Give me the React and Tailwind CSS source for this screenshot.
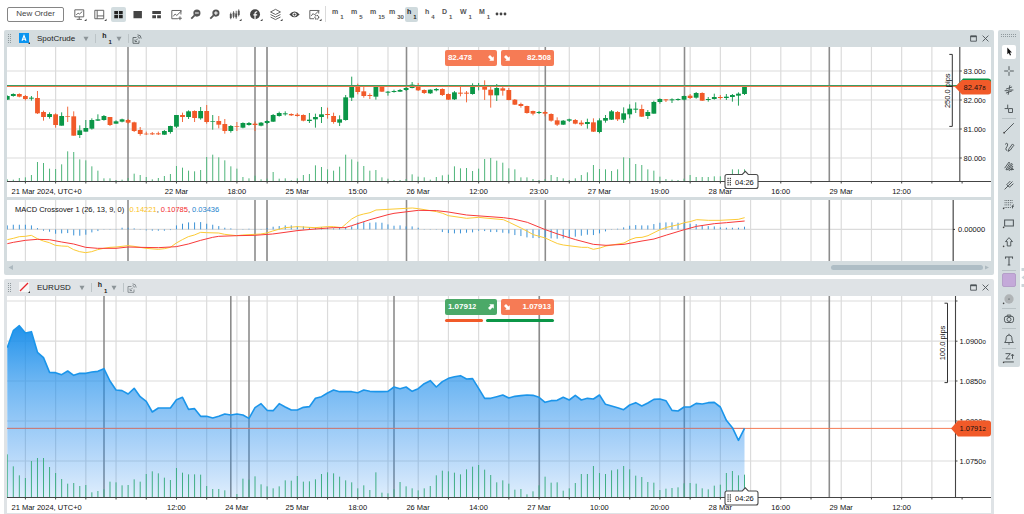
import React from "react";

const STEP = 6.043;
const xAt = (i) => 13.3 + STEP * i;
const GRID_X = Array.from({ length: 31 }, (_, k) => 25.4 + 30.216 * k);
const labelX = (k) => 176.4 + 60.43 * k;

const GREEN = "#0b9647";
const RED = "#f15a29";

/* body top, body bottom, wick top, wick bottom, rising (1) or falling (0) */
const CANDLES = [
  [153, 164, 151, 165, 1], [147, 153, 145, 155, 1], [147, 155, 145, 157, 0], [153, 162, 150, 166, 0], [158, 161, 153, 167, 1],
  [159, 205, 138, 207, 0], [201, 216, 197, 227, 0], [207, 216, 202, 221, 1], [208, 240, 205, 248, 0], [213, 242, 202, 242, 1],
  [213, 215, 185, 231, 0], [214, 272, 199, 272, 0], [256, 270, 241, 279, 1], [249, 260, 225, 260, 1], [225, 251, 220, 254, 1],
  [223, 227, 208, 228, 1], [213, 225, 210, 227, 1], [216, 240, 216, 243, 0], [229, 236, 226, 236, 1], [223, 230, 221, 232, 1],
  [225, 233, 222, 236, 0], [232, 258, 230, 261, 0], [255, 267, 246, 272, 0], [266, 268, 260, 270, 0], [265, 268, 261, 270, 0],
  [265, 268, 260, 270, 0], [258, 269, 255, 270, 1], [243, 261, 242, 266, 1], [210, 245, 210, 249, 1], [210, 216, 203, 231, 0],
  [199, 216, 196, 222, 1], [198, 219, 196, 231, 0], [198, 220, 186, 224, 1], [198, 231, 180, 236, 0], [228, 230, 210, 254, 1],
  [228, 239, 213, 250, 0], [237, 258, 222, 266, 0], [243, 258, 240, 263, 1], [243, 245, 231, 258, 0], [234, 248, 232, 250, 1],
  [234, 240, 231, 242, 1], [236, 240, 230, 258, 0], [233, 242, 231, 244, 1], [228, 234, 226, 237, 1], [210, 230, 207, 231, 1],
  [204, 213, 200, 215, 1], [205, 208, 199, 212, 1], [207, 211, 205, 213, 0], [209, 213, 204, 215, 0], [210, 227, 208, 229, 0],
  [224, 228, 204, 234, 1], [216, 223, 206, 248, 1], [208, 216, 186, 234, 1], [207, 210, 188, 221, 0], [213, 231, 203, 236, 0],
  [223, 233, 211, 243, 1], [157, 225, 150, 227, 1], [124, 158, 95, 168, 1], [124, 141, 116, 148, 0], [139, 153, 122, 158, 0],
  [150, 153, 145, 162, 0], [124, 155, 120, 164, 1], [124, 140, 124, 141, 0], [140, 143, 138, 152, 1], [138, 141, 134, 143, 1],
  [135, 140, 132, 141, 1], [129, 135, 127, 138, 1], [119, 129, 111, 130, 1], [121, 136, 114, 138, 0], [135, 144, 133, 147, 0],
  [134, 145, 133, 147, 1], [132, 136, 129, 139, 1], [132, 150, 130, 153, 0], [147, 164, 145, 165, 0], [142, 163, 138, 165, 1],
  [143, 146, 124, 154, 0], [143, 146, 138, 172, 0], [123, 147, 115, 149, 1], [120, 123, 114, 136, 1], [120, 134, 106, 165, 0],
  [134, 151, 124, 188, 0], [129, 151, 117, 168, 1], [130, 137, 123, 152, 0], [135, 165, 129, 166, 0], [164, 179, 162, 180, 0],
  [177, 183, 173, 188, 0], [183, 204, 182, 206, 0], [198, 206, 197, 211, 0], [201, 204, 198, 207, 1], [201, 206, 197, 214, 0],
  [207, 227, 205, 230, 0], [226, 239, 217, 243, 0], [227, 239, 225, 240, 1], [223, 227, 221, 231, 1], [225, 236, 222, 238, 0],
  [233, 238, 226, 243, 0], [231, 237, 221, 251, 1], [232, 260, 220, 261, 0], [226, 261, 220, 265, 1], [219, 227, 210, 233, 1],
  [199, 224, 195, 225, 1], [201, 223, 198, 228, 0], [205, 224, 187, 234, 1], [191, 208, 178, 220, 1], [191, 194, 172, 204, 1],
  [192, 215, 179, 216, 0], [201, 213, 195, 222, 1], [171, 206, 167, 206, 1], [162, 171, 160, 176, 1], [163, 166, 162, 171, 0],
  [163, 166, 160, 174, 1], [162, 165, 160, 167, 1], [153, 164, 152, 166, 1], [152, 159, 147, 162, 0], [144, 158, 141, 161, 1],
  [144, 167, 142, 168, 0], [162, 165, 156, 170, 1], [156, 162, 146, 164, 1], [156, 159, 150, 164, 0], [155, 159, 147, 165, 1],
  [150, 156, 147, 170, 1], [146, 152, 142, 182, 1], [125, 147, 120, 150, 1],
];

const CRUDE_VOLUME = [
  403, 404, 399, 397, 390, 351, 354, 371, 372, 358, 319, 321, 343, 346, 364, 377, 400, 400, 405, 404, 399, 386, 390, 396, 403, 399, 393, 387,
  363, 368, 377, 379, 375, 336, 329, 337, 346, 364, 371, 396, 400, 392, 403, 401, 381, 401, 400, 406, 400, 390, 387, 361, 366, 373, 377, 365,
  329, 343, 350, 363, 377, 375, 397, 401, 405, 405, 402, 388, 395, 397, 404, 396, 391, 389, 364, 370, 369, 378, 371, 342, 339, 347, 353, 370,
  373, 397, 397, 402, 405, 402, 390, 396, 400, 405, 400, 390, 382, 360, 372, 373, 378, 373, 337, 339, 357, 360, 373, 377, 395, 402, 404, 405,
  401, 390, 396, 396, 396, 394, 394, 390, 373, 373, 373,
];

const MACD_BARS = [
  12, 14, 14, 14, 12, 4, -4, -7, -13, -12, -11, -18, -19, -16, -9, -5, -1, -1, 1, 5, 5, 3, 1, -3, -4, -4, -4, -2, 12, 17, 21, 21, 22, 17, 14,
  10, 5, 3, 1, 1, 2, 1, 1, 4, 8, 10, 12, 12, 10, 9, 7, 5, 7, 5, 3, 7, 5, 9, 21, 22, 20, 21, 20, 15, 11, 12, 9, 9, 5, 1, 1, -1, -8, -11, -12,
  -12, -10, -9, -4, -5, -8, -8, -10, -12, -17, -20, -24, -26, -26, -27, -27, -28, -27, -25, -22, -19, -16, -17, -12, -6, 1, 2, 6, 11, 13, 12,
  12, 16, 20, 21, 21, 20, 19, 17, 16, 13, 10, 9, 6, 5, 5, 5, 8,
];

const MACD_FAST =
  "22,134 40,130 58,125 76,124 94,121 112,131 130,138 148,143 166,151 185,153 203,154 221,164 239,170 257,173 275,170 293,164 311,160 330,157 348,156 384,152 402,154 438,160 475,163 493,161 511,157 529,144 547,134 565,125 583,120 602,112 620,113 656,114 674,118 710,122 728,120 764,118 782,117 800,114 818,108 836,103 855,98 891,95 945,98 982,95 1000,95 1025,98 1040,85 1055,72 1073,62 1091,57 1110,53 1128,45 1182,42 1237,39 1255,41 1310,50 1328,55 1345,62 1400,70 1436,67 1455,69 1510,74 1528,82 1565,100 1582,109 1600,119 1636,129 1655,138 1673,146 1690,150 1745,157 1763,157 1780,163 1800,159 1818,153 1872,144 1890,134 1908,128 1926,127 1944,122 1980,104 2000,97 2035,89 2053,83 2070,80 2090,74 2125,76 2160,76 2215,73 2234,68";
const MACD_SLOW =
  "22,146 40,142 76,136 112,133 148,134 185,141 221,147 257,157 293,160 348,160 384,156 420,157 475,158 529,155 565,147 602,136 638,127 656,124 710,122 764,121 818,117 855,112 891,107 945,102 1000,98 1035,98 1055,92 1110,74 1164,59 1182,55 1255,46 1310,47 1345,51 1400,60 1455,64 1510,68 1540,72 1582,82 1636,104 1673,117 1727,134 1780,148 1818,151 1872,148 1926,138 1962,132 2000,120 2053,104 2090,94 2143,86 2180,83 2234,78";

const EUR_PRICE = [
  158, 107, 92, 114, 110, 172, 188, 232, 233, 239, 228, 241, 235, 235, 231, 229, 221, 258, 285, 287, 297, 280, 305, 319, 351, 339, 339, 339,
  314, 307, 343, 341, 364, 364, 369, 364, 357, 360, 357, 360, 370, 338, 326, 346, 347, 326, 336, 345, 345, 337, 335, 310, 305, 294, 285, 290,
  290, 290, 293, 285, 289, 290, 290, 289, 276, 281, 276, 289, 281, 266, 257, 276, 260, 250, 245, 242, 252, 251, 280, 310, 310, 305, 300, 309,
  304, 302, 300, 301, 307, 322, 317, 316, 307, 315, 301, 315, 310, 312, 300, 328, 333, 338, 344, 330, 323, 333, 324, 313, 312, 317, 346, 348,
  336, 336, 325, 327, 323, 322, 336, 376, 398, 436, 400,
];

const EUR_VOLUME = [
  478, 514, 541, 549, 498, 489, 489, 516, 534, 552, 566, 564, 573, 570, 592, 588, 583, 560, 562, 571, 570, 553, 560, 537, 529, 535, 548, 555,
  519, 533, 538, 538, 539, 573, 582, 582, 586, 608, 597, 551, 554, 544, 568, 574, 580, 574, 556, 557, 543, 560, 559, 553, 537, 532, 535, 545,
  556, 562, 580, 571, 585, 532, 593, 595, 583, 561, 574, 580, 586, 580, 573, 541, 527, 529, 533, 538, 523, 515, 510, 524, 540, 562, 556, 566,
  584, 582, 598, 589, 571, 545, 563, 562, 587, 580, 564, 537, 537, 513, 534, 537, 526, 523, 513, 523, 542, 546, 561, 563, 585, 581, 579, 577,
  565, 564, 566, 580, 583, 572, 569, 534, 528, 541, 539,
];

const CRUDE_SESSIONS = [128, 255, 267, 406.5, 545.3, 684.5, 829.3];
const EUR_SESSIONS = [104, 230.8, 249, 394, 539.3, 684.3, 829.3];

const toPoints = (text) =>
  text
    .split(" ")
    .map((p) => p.split(",").map(Number))
    .map(([x, y]) => `${x / 3},${195 + y / 3}`)
    .join(" ");

/* Shapes are placed in page units; labels sit on the doubled viewBox grid. */
function ChartSvg({ top, height, label, children, labels }) {
  return (
    <svg
      viewBox={`14 ${top * 2} 1968 ${height * 2}`}
      role="img"
      aria-label={label}
      className="block w-full bg-white font-['Liberation_Sans',Arial,sans-serif]"
    >
      <g transform="scale(2)">{children}</g>
      {labels}
    </svg>
  );
}

function Grid({ top, bottom, right, rows, sessions }) {
  return (
    <g>
      {GRID_X.map((x) => (
        <line key={x} x1={x} x2={x} y1={top} y2={bottom} stroke="#dbdbdb" strokeWidth="1.2" />
      ))}
      {rows.map((y) => (
        <line key={y} x1="7" x2={right} y1={y} y2={y} stroke="#dbdbdb" strokeWidth="1.2" />
      ))}
      {sessions.map((x) => (
        <line key={x} x1={x} x2={x} y1={top} y2={bottom} stroke="#8c8c8c" strokeWidth="1.6" />
      ))}
    </g>
  );
}

function Axes({ top, y, x, ticks }) {
  return (
    <g stroke="#444" fill="none">
      <line x1="7" x2="991" y1={y} y2={y} />
      <line x1={x} x2={x} y1={top} y2={y} strokeWidth="1.1" />
      {[...GRID_X, 25.4 + 30.216 * 31].map((gx) => (
        <line key={gx} x1={gx} x2={gx} y1={y} y2={y + 2} />
      ))}
      {ticks.map((t) => (
        <line key={t} x1={x} x2={x + 2} y1={t} y2={t} />
      ))}
    </g>
  );
}

function TimeLabels({ y, items }) {
  return (
    <g fontSize="15" fill="#111">
      <text x="23" y={y}>21 Mar 2024, UTC+0</text>
      {items.map((t, k) =>
        t ? (
          <text key={k} x={labelX(k) * 2} y={y} textAnchor="middle">
            {t}
          </text>
        ) : null
      )}
    </g>
  );
}

function Price({ x, y, main, last }) {
  return (
    <text x={x} y={y} fontSize="15" fill="#111">
      {main}
      <tspan fontSize="12">{last}</tspan>
    </text>
  );
}

function Countdown({ y }) {
  return (
    <g>
      <path
        d={`M727 ${y}H742.3L745.3 ${y - 3.2}L748.3 ${y}H756Q758 ${y} 758 ${y + 2}V${y + 12}Q758 ${y + 14} 756 ${y + 14}H727Q725 ${y + 14} 725 ${y + 12}V${y + 2}Q725 ${y} 727 ${y}Z`}
        fill="#fff"
        stroke="#4a4a4a"
        strokeWidth="1.1"
      />
      {[0, 1, 2, 3].map((r) =>
        [0, 1].map((c) => (
          <rect key={`${r}${c}`} x={727.4 + c * 2.3} y={y + 3.3 + r * 2.1} width="1.3" height="1.3" fill="#444" />
        ))
      )}
    </g>
  );
}

function CrudeChart() {
  return (
    <ChartSvg
      top={47}
      height={150}
      label="SpotCrude candles"
      labels={
        <g>
          <TimeLabels
            y={387}
            items={["22 Mar", "18:00", "25 Mar", "15:00", "26 Mar", "12:00", "23:00", "27 Mar", "19:00", "28 Mar", "16:00", "29 Mar", "12:00"]}
          />
          <g transform="scale(2)">
            <Countdown y={174.5} />
          </g>
          <text x="1470" y="369" fontSize="15" fill="#111">04:26</text>
          <Price x={1927} y={148} main="83.00" last="0" />
          <Price x={1927} y={205} main="82.00" last="0" />
          <Price x={1927} y={263} main="81.00" last="0" />
          <Price x={1927} y={321} main="80.00" last="0" />
          <path d="M1912 173L1926 157H1976Q1982 157 1982 162V180H1926Z" fill={GREEN} />
          <path d="M1910 174L1924 160H1976Q1982 160 1982 165V184Q1982 189 1976 189H1924Z" fill={RED} />
          <Price x={1927} y={179} main="82.47" last="8" />
          <text transform="translate(1899 181.500) rotate(-90)" fontSize="15" fill="#111" textAnchor="middle">250.0 pips</text>
        </g>
      }
    >
      <Grid top={47} bottom={181} right={959} rows={[71, 100, 129, 158]} sessions={CRUDE_SESSIONS} />
      {CRUDE_VOLUME.map((v, k) => (
        <line key={k} x1={xAt(k - 1)} x2={xAt(k - 1)} y1={45 + v / 3} y2="181" stroke="#4fb57a" />
      ))}
      {CANDLES.map(([t, b, h, l, up], k) => {
        const x = xAt(k - 1);
        const color = up ? GREEN : RED;
        return (
          <g key={k}>
            <line x1={x} x2={x} y1={45 + h / 3} y2={45 + l / 3} stroke={color} strokeWidth="0.9" />
            <rect x={x - 2.4} y={45 + t / 3} width="4.800" height={(b - t) / 3} fill={color} />
          </g>
        );
      })}
      <line x1="7" x2="957" y1="86.500" y2="86.500" stroke="#f0764c" />
      <line x1="7" x2="957" y1="85.500" y2="85.500" stroke="#3b9d62" />
      <Axes top={47} y={181.5} x={959.8} ticks={[71, 100, 129, 158]} />
      <path d="M949.300 54.400H952.300V126.400H949.300" fill="none" stroke="#333" />
    </ChartSvg>
  );
}

function MacdChart() {
  return (
    <ChartSvg
      top={200}
      height={61}
      label="MACD Crossover"
      labels={
        <g fontSize="15">
          <text x="30" y="424" fill="#111">
            MACD Crossover 1 (26, 13, 9, 0)
          </text>
          <text x="259" y="424" fill="#111">
            <tspan fill="#fbc21e">0.14221</tspan>, <tspan fill="#f22c2c">0.10785</tspan>, <tspan fill="#2483cd">0.03436</tspan>
          </text>
          <text x="1916" y="464" fill="#111">0.00000</text>
        </g>
      }
    >
      <Grid top={200} bottom={261} right={953} rows={[229.4]} sessions={CRUDE_SESSIONS} />
      {MACD_BARS.map((v, k) => (
        <line key={k} x1={xAt(k - 1)} x2={xAt(k - 1)} y1="229.400" y2={229.4 - v / 3} stroke="#3d93d6" />
      ))}
      <polyline points={toPoints(MACD_FAST)} fill="none" stroke="#fccb35" />
      <polyline points={toPoints(MACD_SLOW)} fill="none" stroke="#f83a3a" />
      <line x1="953.200" x2="953.200" y1="200" y2="261" stroke="#555" strokeWidth="1.300" />
      <line x1="953" x2="955" y1="229.400" y2="229.400" stroke="#333" />
    </ChartSvg>
  );
}

function EurChart() {
  const line = EUR_PRICE.map((v, k) => `${xAt(k - 1)},${295 + v / 3}`);
  const rows = [301, 341.2, 381, 421, 461];
  return (
    <ChartSvg
      top={296}
      height={217}
      label="EURUSD area"
      labels={
        <g>
          <TimeLabels
            y={1019}
            items={["12:00", "24 Mar", "25 Mar", "18:00", "26 Mar", "14:00", "27 Mar", "10:00", "20:00", "28 Mar", "16:00", "29 Mar", "12:00"]}
          />
          <g transform="scale(2)">
            <Countdown y={491} />
          </g>
          <text x="1470" y="1001" fontSize="15" fill="#111">04:26</text>
          <Price x={1919} y={688} main="1.0900" last="0" />
          <Price x={1919} y={767} main="1.0850" last="0" />
          <Price x={1919} y={847} main="1.0800" last="0" />
          <Price x={1919} y={927} main="1.0750" last="0" />
          <path d="M1902 857L1916 841H1976Q1982 841 1982 846V867Q1982 873 1976 873H1916Z" fill={RED} />
          <Price x={1919} y={862} main="1.0791" last="2" />
          <text transform="translate(1889 686) rotate(-90)" fontSize="15" fill="#111" textAnchor="middle">100.0 pips</text>
        </g>
      }
    >
      <defs>
        <linearGradient id="eur-fill" gradientUnits="userSpaceOnUse" x1="0" x2="0" y1="325" y2="498">
          <stop offset="0" stopColor="#1a8fea" stopOpacity="0.97" />
          <stop offset="0.330" stopColor="#1f8fec" stopOpacity="0.65" />
          <stop offset="0.750" stopColor="#2b8eee" stopOpacity="0.35" />
          <stop offset="1" stopColor="#2b8eee" stopOpacity="0.150" />
        </linearGradient>
      </defs>
      <Grid top={296} bottom={498} right={955} rows={rows} sessions={EUR_SESSIONS} />
      <line x1="7" x2="953" y1="428.400" y2="428.400" stroke="#f47b56" />
      <polygon points={`${line.join(" ")} ${xAt(121)},497.5 ${xAt(-1)},497.5`} fill="url(#eur-fill)" />
      <line x1="7" x2={xAt(121)} y1="428.400" y2="428.400" stroke="#d9796a" strokeWidth="0.800" />
      <polyline points={line.join(" ")} fill="none" stroke="#1b95ea" strokeWidth="1.600" strokeLinejoin="round" />
      {EUR_VOLUME.map((v, k) => (
        <line key={k} x1={xAt(k - 1)} x2={xAt(k - 1)} y1={295 + v / 3} y2="497.500" stroke="#3fae84" />
      ))}
      <Axes top={296} y={497.5} x={955.5} ticks={rows} />
      <path d="M944.500 303.200H947.500V382.600H944.500" fill="none" stroke="#333" />
    </ChartSvg>
  );
}

function ArrowGlyph({ up }) {
  return (
    <svg viewBox="0 0 6 6" aria-hidden="true" className="size-[6px] shrink-0">
      <path
        d={up ? "M1.200 0.200H5.800V4.800L4.500 3.500L2 6L0 4L2.500 1.500Z" : "M5.800 1.200V5.800H1.200L2.500 4.500L0 2L2 0L4.500 2.500Z"}
        fill="#fff"
      />
    </svg>
  );
}

function PriceText({ main, last }) {
  return (
    <span className="flex items-baseline text-[8px] leading-[10px] font-bold text-white">
      {main}
      <span className="text-[7px]">{last}</span>
    </span>
  );
}

function Quote({ bid, ask, bidUp, children }) {
  return (
    <div className="absolute top-[3px] left-[44.500%] w-[109px]">
      <div className="flex gap-1">
        <button
          type="button"
          aria-label="Sell"
          className={`flex h-4 flex-1 items-center justify-between rounded-[2px] px-[3px] ${bidUp ? "bg-[#4ba968]" : "bg-[#f67b55]"}`}
        >
          <PriceText main={bid[0]} last={bid[1]} />
          <ArrowGlyph up={bidUp} />
        </button>
        <button
          type="button"
          aria-label="Buy"
          className="flex h-4 flex-1 items-center justify-between rounded-[2px] bg-[#f67b55] px-[3px]"
        >
          <ArrowGlyph />
          <PriceText main={ask[0]} last={ask[1]} />
        </button>
      </div>
      {children}
    </div>
  );
}

function Dots({ cols, rows, className }) {
  const cells = [];
  for (let r = 0; r < rows; r++) for (let c = 0; c < cols; c++) cells.push([c * 2, r * 2]);
  return (
    <svg viewBox={`0 0 ${cols * 2} ${rows * 2}`} aria-hidden="true" className={className}>
      {cells.map(([x, y]) => (
        <rect key={`${x}-${y}`} x={x} y={y} width="1" height="1" fill="#8f999d" />
      ))}
    </svg>
  );
}

function Caret() {
  return (
    <svg viewBox="0 0 6 6" aria-hidden="true" className="size-[6px] shrink-0">
      <path d="M0.500 0.800H5.500L3 5.200Z" fill="#8c9498" />
    </svg>
  );
}

function PanelHeader({ symbol, logo, active }) {
  return (
    <header className="flex h-[17px] items-center">
      <Dots cols={2} rows={5} className="mr-[7px] ml-px h-[10px] w-1 shrink-0" />
      {logo}
      <button type="button" className="ml-[7px] flex items-center gap-2 text-[8px] leading-[10px] text-[#222]">
        {symbol}
        <Caret />
      </button>
      <span className="ml-[6px] h-[9px] w-px bg-[#bcc4c7]" />
      <button type="button" className="ml-[6px] flex h-[13px] items-center gap-1">
        <span className="flex h-[13px] text-[7px] leading-[8px] font-bold text-[#222]">
          <span>h</span>
          <span className="ml-[2px] self-end text-[6px] leading-[6px]">1</span>
        </span>
        <Caret />
      </button>
      <span className="ml-[6px] h-[9px] w-px bg-[#bcc4c7]" />
      <button type="button" aria-label="Link chart" className="ml-[3px]">
        <svg viewBox="0 0 10 10" fill="none" stroke={active ? "#5c6468" : "#82898d"} strokeWidth="0.900" className="size-[10px]">
          <path d="M4.500 3.500H1V9.300H7V6.500" />
          <path d="M4 6.500L5.800 4.600M3 5.600V7.500H5" />
          <path d="M5.500 2.600Q7.400 2.600 7.400 4.600M5.500 0.800Q9.200 0.800 9.200 4.600" />
        </svg>
      </button>
      <span className="flex-1" />
      <button type="button" aria-label="Maximize" className="mr-[5px]">
        <svg viewBox="0 0 7 7" className="size-[7px]" fill="none" stroke="#4d5458" strokeWidth="0.900">
          <path d="M0.600 0.900H6.400V6.200H0.600Z" />
          <path d="M0.600 1.500H6.400" strokeWidth="1.400" />
        </svg>
      </button>
      <button type="button" aria-label="Close" className="mr-[2px]">
        <svg viewBox="0 0 7 7" className="size-[7px]" stroke="#4d5458" strokeWidth="0.900">
          <path d="M0.600 0.600L6.400 6.400M6.400 0.600L0.600 6.400" />
        </svg>
      </button>
    </header>
  );
}

const Corner = () => <path d="M15.500 12.500V15H13Z" fill="#444" stroke="none" />;

const TOOL_ICONS = {
  template: (
    <>
      <path d="M3 3H12.500V10.500H3ZM7.700 10.500V13M5 13.200H10.500" />
      <path d="M4.500 8.500L6.500 6.500L8 7.500L11 4.800" />
      <Corner />
    </>
  ),
  layout: (
    <>
      <path d="M3 3.500H12.500V12.500H3ZM5.500 3.500V12.500M5.500 9.500H12.500" />
      <Corner />
    </>
  ),
  grid: <path d="M3.500 4.200H7.500V7.600H3.500ZM8.500 4.200H12.500V7.600H8.500ZM3.500 8.600H7.500V12H3.500ZM8.500 8.600H12.500V12H8.500Z" fill="#222" stroke="none" />,
  single: <path d="M3.700 4.300H12.700V12H3.700Z" fill="#444" stroke="none" />,
  split: <path d="M3.500 4.200H12.700V7.500H3.500ZM3.500 8.700H7.500V12H3.500ZM8.700 8.700H12.700V12H8.700Z" fill="#444" stroke="none" />,
  addIndicator: (
    <>
      <path d="M9.500 12.500H3V3.700H12.700V8" />
      <path d="M4.500 10L6.500 7.500L8.300 9L13.500 4M11.700 10V14M9.700 12H13.700" />
    </>
  ),
  zoomOut: (
    <>
      <circle cx="9.500" cy="6.500" r="3.800" fill="#555" stroke="none" />
      <path d="M7 9L3.500 12.500" stroke="#555" strokeWidth="1.900" />
      <path d="M7.500 6.500H11.500" stroke="#fff" strokeWidth="1.100" />
    </>
  ),
  zoomIn: (
    <>
      <circle cx="9.500" cy="6.500" r="3.800" fill="#555" stroke="none" />
      <path d="M7 9L3.500 12.500" stroke="#555" strokeWidth="1.900" />
      <path d="M7.500 6.500H11.500M9.500 4.500V8.500" stroke="#fff" strokeWidth="1.100" />
    </>
  ),
  candles: (
    <>
      <path d="M4 6V13M7 4.500V12M9.800 4V12.500M12.500 2.500V10" />
      <path d="M3 7.500H5V11.700H3ZM6 6H8V10.500H6ZM8.800 7H10.800V11H8.800ZM11.500 4H13.500V8.500H11.500Z" fill="#555" stroke="none" />
      <Corner />
    </>
  ),
  indicator: (
    <>
      <circle cx="7.500" cy="7.700" r="5.300" fill="#444" stroke="none" />
      <path d="M7.500 13V6.800Q7.500 5 9.800 5.300M5.700 8.500H9.800" stroke="#fff" strokeWidth="1.300" />
      <Corner />
    </>
  ),
  layers: (
    <>
      <path d="M8 2.500L13.300 5.300L8 8L2.700 5.300ZM2.700 8L8 10.700L13.300 8M2.700 10.700L8 13.400L13.300 10.700" />
      <Corner />
    </>
  ),
  eye: (
    <>
      <path d="M2.500 8Q8 1.800 13.500 8Q8 14 2.500 8Z" fill="#444" stroke="none" />
      <circle cx="8" cy="8" r="2.200" fill="#fff" stroke="none" />
      <circle cx="8" cy="8" r="1.200" fill="#444" stroke="none" />
    </>
  ),
  settings: (
    <>
      <path d="M7.500 12.500H3V3.700H12.500V7" />
      <path d="M4.500 9.500L6.500 7L8 8.500L13 3.500" />
      <circle cx="10.500" cy="11" r="2" strokeDasharray="1.200 0.500" strokeWidth="1.300" />
      <Corner />
    </>
  ),
};

const TOOLS = [
  ["template", "Templates", "w-5"],
  ["layout", "Layout", "w-5"],
  ["grid", "Grid view", "w-[19px]"],
  ["single", "Single view", "w-[19px]"],
  ["split", "Split view", "w-[19px]"],
  ["addIndicator", "Add indicator", "w-5"],
  ["zoomOut", "Zoom out", "w-[19px]"],
  ["zoomIn", "Zoom in", "w-[19px]"],
  ["candles", "Chart type", "w-[21px]"],
  ["indicator", "Functions", "w-5"],
  ["layers", "Layers", "w-5"],
  ["eye", "Show objects", "w-[19px]"],
  ["settings", "Chart settings", "w-[21px]"],
];

const FRAMES = [
  ["m", "1", "w-[19px]"],
  ["m", "5", "w-[19px]"],
  ["m", "15", "w-[19px]"],
  ["m", "30", "w-[18px]"],
  ["h", "1", "w-[18px]"],
  ["h", "4", "w-[17px]"],
  ["D", "1", "w-[18px]"],
  ["W", "1", "w-[19px]"],
  ["M", "1", "w-[18px]"],
];

function Toolbar() {
  return (
    <nav aria-label="Main toolbar" className="flex h-[30px] items-center pb-[2px] pl-[7px]">
      <button type="button" className="h-[15px] w-[57px] rounded-[2px] border border-[#858585] text-[8px] leading-[10px] text-[#444]">
        New Order
      </button>
      <span className="ml-[5px] flex">
        {TOOLS.map(([id, label, width]) => (
          <button key={id} type="button" aria-label={label} className={`flex h-4 items-center justify-center ${width}`}>
            <svg
              viewBox="0 0 16 16"
              fill="none"
              stroke="#5c5c5c"
              className={`h-[15px] w-[15px] rounded-[2px] ${id === "grid" ? "bg-[#d3dde0]" : ""}`}
            >
              {TOOL_ICONS[id]}
            </svg>
          </button>
        ))}
      </span>
      <span className="h-4 w-px bg-[#dadada]" />
      <span className="ml-1 flex">
        {FRAMES.map(([unit, n, width]) => (
          <button key={unit + n} type="button" className={`flex h-[15px] ${width}`}>
            <span
              className={`flex h-[15px] rounded-[2px] pt-px pr-px pb-[2px] pl-[2px] text-[7px] leading-[8px] font-bold ${
                unit + n === "h1" ? "bg-[#cfdadd] text-[#222]" : "text-[#555]"
              }`}
            >
              <span>{unit}</span>
              <span className="ml-[2px] self-end text-[6px] leading-[6px]">{n}</span>
            </span>
          </button>
        ))}
      </span>
      <button type="button" aria-label="More timeframes">
        <svg viewBox="0 0 12 4" className="h-1 w-3" fill="#444">
          <circle cx="2" cy="2" r="1.400" />
          <circle cx="6" cy="2" r="1.400" />
          <circle cx="10" cy="2" r="1.400" />
        </svg>
      </button>
    </nav>
  );
}

const LeftDot = () => <circle cx="1.800" cy="13" r="0.900" fill="#444" stroke="none" />;

const DRAW_TOOLS = [
  ["Crosshair", <path d="M8 2.500V7M8 9V13.500M2.500 8H7M9 8H13.500" />],
  ["Linked crosshair", <path d="M9 2.500L7 13.500M3 8.800H7M8.500 8H13M4.500 7L11.500 4.500M4.500 11.500L11.500 9" />],
  ["Measure", <path d="M6.500 3V8M3 7.500H7M7.500 7.500H12V12H7.500Z" strokeWidth="1.100" />],
  [
    "Trend line",
    <g>
      <path d="M3 13L13.500 2.500" />
      <circle cx="2.500" cy="13.300" r="1.100" fill="#444" stroke="none" />
    </g>,
    true,
  ],
  ["Pencil", <path d="M3.500 5Q6 2.500 6.500 4.500Q6.500 7 4.500 9.500Q4 12 6 12M7 13L8 10L12 4.500L13.500 6L9.500 11.500L7 13" />],
  ["Brush", <path d="M3 10.500L8 3.500L9 5L4.500 12L6 12.500L11 5L12 6L7.500 12.500L9 13L12.500 8M11 13Q10 10.500 12 10.500Q13 12 11.500 12H13.500" />],
  ["Pitchfork", <path d="M3 13L7.500 8.500M5.500 7.500L8.500 10.500M5.500 7.500L9.500 3.500M7.500 8.500L12 4M8.500 10.500L13 6.500M6.500 8.500L7.500 9.500" />],
  [
    "Fibonacci",
    <g>
      <path d="M3 4H13M3 6.500H13M3 9H10M3 12H10" strokeDasharray="1 1" />
      <path d="M12 13V10Q12 9 13.500 9M11 10.700H13.500" />
      <LeftDot />
    </g>,
  ],
  [
    "Rectangle",
    <g>
      <path d="M3 4.500H13V11.500H3Z" strokeWidth="1.200" />
      <LeftDot />
    </g>,
  ],
  [
    "Arrow",
    <g>
      <path d="M8 3L12 7.500H10V12.500H6V7.500H4Z" strokeWidth="1.100" />
      <LeftDot />
    </g>,
  ],
  ["Text", <path d="M4 5.500V3.500H12V5.500M8 3.500V12.500M6.500 12.500H9.500" strokeWidth="1.200" />],
];

function SideButton({ label, className, children }) {
  return (
    <button type="button" aria-label={label} className={`flex w-[14px] items-center justify-center ${className}`}>
      <svg viewBox="0 0 16 16" fill="none" stroke="#4f565a" strokeWidth="1.100" className="size-[14px]">
        {children}
      </svg>
    </button>
  );
}

function SideBar() {
  return (
    <aside
      aria-label="Drawing tools"
      className="relative flex w-[22px] shrink-0 flex-col items-center self-start rounded-[2px] bg-[#d4dcdf]"
    >
      <span className="flex h-3 items-center">
        <Dots cols={8} rows={2} className="h-1 w-4" />
      </span>
      <span className="flex h-[19px] items-center">
        <button type="button" aria-label="Pointer" className="flex size-[14px] items-center justify-center rounded-[2px] bg-white">
          <svg viewBox="0 0 8 10" className="h-[9px] w-[7px]">
            <path d="M1.500 0.500L6.800 6H4.500L5.800 9L4.500 9.500L3.300 6.700L1.500 8.200Z" fill="#111" />
          </svg>
        </button>
      </span>
      {DRAW_TOOLS.map(([label, icon, line]) => (
        <SideButton key={label} label={label} className={`h-[19px] ${line ? "border-t border-[#bac3c6]" : ""}`}>
          {icon}
        </SideButton>
      ))}
      <span className="flex h-[19px] items-center border-t border-[#bac3c6]">
        <button type="button" aria-label="Colour" className="size-[14px] rounded-[2px] border border-[#b59fc9] bg-[#c4a9d9]" />
      </span>
      <SideButton label="Opacity" className="h-[19px]">
        <circle cx="8" cy="8" r="5.300" fill="#b0b4b6" stroke="none" />
        <circle cx="8" cy="8" r="1" fill="#7a7f82" stroke="none" />
        <LeftDot />
      </SideButton>
      <SideButton label="Snapshot" className="h-5 border-t border-[#bac3c6]">
        <path d="M4.500 5Q3 5 2.800 7V9.500Q3 12 5 12H11Q13 12 13.200 9.500V7Q13 5 11.500 5ZM6 5V3.500H10V5" />
        <circle cx="8" cy="8.500" r="2.300" />
      </SideButton>
      <SideButton label="Alert" className="h-5 border-t border-[#bac3c6]">
        <path d="M3 12H13Q11.300 10.500 11.300 8V6.500Q11 3.500 8 3.500Q5 3.500 4.700 6.500V8Q4.700 10.500 3 12ZM8 2V3.500M7 13.700H9" />
      </SideButton>
      <SideButton label="Order of objects" className="mb-px h-[18px] border-t border-[#bac3c6]">
        <path d="M4 3H9.500L4.500 9H9.500M12 9V4M10.500 5.500L12 3.500L13.500 5.500M2.500 12.500H13.500" strokeWidth="1.100" />
        <LeftDot />
      </SideButton>
      <svg viewBox="0 0 3 20" aria-hidden="true" className="absolute top-[238px] -right-[4px] h-5 w-[3px]">
        <path d="M0.500 0H3V3H0.500ZM3 7.500V11.500L0.500 9.500ZM0.500 16H3V19H0.500Z" fill="#ccd5d9" />
      </svg>
    </aside>
  );
}

export default function App() {
  return (
    <div className="min-h-screen overflow-x-hidden bg-white font-['Liberation_Sans',Arial,sans-serif]">
      <Toolbar />
      <div className="flex gap-1 px-1">
        <main className="flex min-w-0 flex-1 flex-col gap-1">
          <section aria-label="SpotCrude" className="rounded-[2px] bg-[#d4dcdf] px-[3px]">
            <PanelHeader
              symbol="SpotCrude"
              active
              logo={
                <svg viewBox="0 0 11 11" className="size-[11px]" aria-hidden="true">
                  <path d="M0 0H10V10H0Z" fill="#0a94f0" />
                  <path d="M3 7.800L5 2.500L7 7.800M3.700 6.200H6.300" fill="none" stroke="#fff" strokeWidth="1.100" />
                  <path d="M11 9V11H9Z" fill="#333" />
                </svg>
              }
            />
            <div className="relative">
              <CrudeChart />
              <Quote bid={["82.47", "8"]} ask={["82.50", "8"]} />
            </div>
            <div className="mt-[3px]">
              <MacdChart />
            </div>
            <div className="flex h-[14px] items-center pb-[2px]">
              <button type="button" aria-label="Scroll left" className="ml-px">
                <svg viewBox="0 0 5 5" className="size-[5px]">
                  <path d="M5 0V5L0.500 2.500Z" fill="#adb9bf" />
                </svg>
              </button>
              <span className="flex flex-1 justify-end">
                <span className="h-[5px] w-[15.700%] rounded-full bg-[#aebdc5]" />
              </span>
              <button type="button" aria-label="Scroll right" className="mr-[2px] ml-[2px]">
                <svg viewBox="0 0 4 5" className="h-[5px] w-1">
                  <path d="M0 0.500V4.500L4 2.500Z" fill="#adb9bf" />
                </svg>
              </button>
            </div>
          </section>
          <section aria-label="EURUSD" className="rounded-t-[2px] bg-[#dfe3e6] px-[3px] pb-px">
            <PanelHeader
              symbol="EURUSD"
              logo={
                <svg viewBox="0 0 11 11" className="size-[11px]" aria-hidden="true">
                  <path d="M0 0H10V10H0Z" fill="#f7f7f7" />
                  <path d="M1 9L9 1" stroke="#e8232b" strokeWidth="1.300" />
                  <path d="M11 9V11H9Z" fill="#333" />
                </svg>
              }
            />
            <div className="relative">
              <EurChart />
              <Quote bid={["1.0791", "2"]} ask={["1.0791", "3"]} bidUp>
                <div className="mt-1 flex gap-[3px]">
                  <span className="h-[3px] w-[38px] rounded-full bg-[#f15a29]" />
                  <span className="h-[3px] flex-1 rounded-full bg-[#0b9647]" />
                </div>
              </Quote>
            </div>
          </section>
        </main>
        <SideBar />
      </div>
    </div>
  );
}
